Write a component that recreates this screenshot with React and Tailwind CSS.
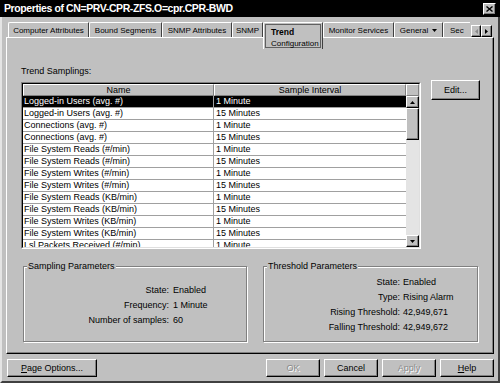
import React from "react";

const rows = [
  ["Logged-in Users (avg. #)", "1 Minute"],
  ["Logged-in Users (avg. #)", "15 Minutes"],
  ["Connections (avg. #)", "1 Minute"],
  ["Connections (avg. #)", "15 Minutes"],
  ["File System Reads (#/min)", "1 Minute"],
  ["File System Reads (#/min)", "15 Minutes"],
  ["File System Writes (#/min)", "1 Minute"],
  ["File System Writes (#/min)", "15 Minutes"],
  ["File System Reads (KB/min)", "1 Minute"],
  ["File System Reads (KB/min)", "15 Minutes"],
  ["File System Writes (KB/min)", "1 Minute"],
  ["File System Writes (KB/min)", "15 Minutes"],
  ["Lsl Packets Received (#/min)", "1 Minute"],
];

const raised =
  "bg-[#c0c0c0] border border-t-white border-l-white border-r-black border-b-black shadow-[inset_-1px_-1px_0_#808080]";

function Btn({ children, className = "", disabled }) {
  return (
    <div
      className={`flex items-center justify-center h-[18px] text-[9px] leading-none ${raised} ${
        disabled ? "text-[#8a8a8a] [text-shadow:1px_1px_0_#fff]" : "text-black"
      } ${className}`}
    >
      {children}
    </div>
  );
}

const tabBase =
  "h-[15px] flex items-center justify-center shrink-0 pt-[1px] leading-none border-t border-l border-r border-t-white border-l-white border-r-[#404040] rounded-tl-[2px] rounded-tr-[1px] bg-[#c0c0c0]";

export default function App() {
  return (
    <div className="w-[500px] h-[383px] bg-[#c0c0c0] flex flex-col font-['Liberation_Sans',Arial,sans-serif] text-black overflow-hidden select-none">
      {/* Title bar */}
      <div className="h-[17px] shrink-0 bg-black flex items-center justify-between pl-[4px] pr-[4px]">
        <span className="text-white font-bold text-[10.5px] tracking-[-0.4px] leading-none">
          Properties of CN=PRV-CPR-ZFS.O=cpr.CPR-BWD
        </span>
        <div className={`w-[13px] h-[12px] flex items-center justify-center ${raised}`}>
          <svg width="7" height="6" viewBox="0 0 7 6">
            <path d="M0.5 0.5L6.5 5.5M6.5 0.5L0.5 5.5" stroke="black" strokeWidth="1.4" />
          </svg>
        </div>
      </div>

      {/* Body */}
      <div className="flex-1 flex flex-col border-l-2 border-l-[#e4e4e4] border-r-2 border-r-[#404040] border-b-2 border-b-[#404040]">
        {/* Tabs */}
        <div className="ml-[6px] mt-[5px] h-[15px] flex items-start text-[8px] relative z-10">
          <div className={`${tabBase} w-[81px]`}>Computer Attributes</div>
          <div className={`${tabBase} w-[73px]`}>Bound Segments</div>
          <div className={`${tabBase} w-[70px]`}>SNMP Attributes</div>
          <div className={`${tabBase} w-[31px]`}>SNMP</div>
          <div className="w-[60px] h-[27px] shrink-0 bg-[#c0c0c0] border-t border-l border-r border-t-white border-l-white border-r-[#404040] rounded-tl-[2px] p-[1px]">
            <div className="w-full h-full border border-[#606060] flex flex-col pl-[5px] pt-[2px]">
              <span className="font-bold text-[8.5px] leading-[11px]">Trend</span>
              <span className="text-[8px] leading-[11px]">Configuration</span>
            </div>
          </div>
          <div className={`${tabBase} w-[71px]`}>Monitor Services</div>
          <div className={`${tabBase} w-[49px] gap-[4px]`}>
            <span>General</span>
            <svg width="5" height="3" viewBox="0 0 5 3">
              <path d="M0 0H5L2.5 3Z" fill="black" />
            </svg>
          </div>
          <div className="h-[15px] w-[27px] shrink-0 overflow-hidden flex items-center pl-[6px] pt-[1px] leading-none border-t border-l border-t-white border-l-white rounded-tl-[2px] whitespace-nowrap">
            Sec
          </div>
          <div className="ml-[1px] mt-[3px] flex">
            <div className={`w-[10px] h-[12px] flex items-center justify-center ${raised}`}>
              <svg width="3" height="5" viewBox="0 0 3 5">
                <path d="M3 0V5L0 2.5Z" fill="#8a8a8a" />
              </svg>
            </div>
            <div className={`w-[11px] h-[12px] flex items-center justify-center ${raised}`}>
              <svg width="3" height="5" viewBox="0 0 3 5">
                <path d="M0 0V5L3 2.5Z" fill="black" />
              </svg>
            </div>
          </div>
        </div>

        {/* Panel */}
        <div className="ml-[4px] w-[488px] h-[317px] shrink-0 border border-t-white border-l-white border-r-black border-b-black shadow-[inset_-1px_-1px_0_#808080] pt-[27px] pl-[14px] text-[9px]">
          <div className="h-[12px] leading-[12px]">Trend Samplings:</div>

          <div className="flex items-start mt-[3px]">
            {/* Table */}
            <div className="mt-[2px] w-[400px] h-[167px] border border-t-[#808080] border-l-[#808080] border-r-white border-b-white">
              <div className="w-full h-full border border-t-black border-l-black border-r-[#dfdfdf] border-b-[#dfdfdf] flex flex-col bg-white">
                {/* Header */}
                <div className="h-[12px] flex shrink-0 bg-[#c0c0c0]">
                  <div className="w-[191px] h-full flex items-center justify-center leading-none border-t border-l border-t-white border-l-white border-r border-b border-r-[#808080] border-b-[#808080]">
                    Name
                  </div>
                  <div className="w-[192px] h-full flex items-center justify-center leading-none border-t border-l border-t-white border-l-white border-r border-b border-r-[#808080] border-b-[#808080]">
                    Sample Interval
                  </div>
                  <div className="w-[13px] h-full border-t border-l border-t-white border-l-white border-r border-b border-r-[#808080] border-b-[#808080]" />
                </div>
                {/* Body */}
                <div className="flex-1 flex overflow-hidden">
                  <div className="w-[383px] flex flex-col">
                    {rows.map(([n, v], i) => (
                      <div
                        key={i}
                        className={`h-[12px] shrink-0 flex border-b border-b-[#a0a0a0] leading-[11px] whitespace-nowrap ${
                          i === 0 ? "bg-black text-white" : "bg-white text-black"
                        }`}
                      >
                        <div className="w-[191px] pl-[1px] border-r border-r-[#a0a0a0] overflow-hidden">{n}</div>
                        <div className="w-[192px] pl-[2px] overflow-hidden">{v}</div>
                      </div>
                    ))}
                  </div>
                  {/* Scrollbar */}
                  <div className="w-[13px] flex flex-col">
                    <div className={`h-[12px] shrink-0 flex items-center justify-center ${raised}`}>
                      <svg width="5" height="3" viewBox="0 0 5 3">
                        <path d="M0 3H5L2.5 0Z" fill="black" />
                      </svg>
                    </div>
                    <div className={`h-[32px] shrink-0 ${raised}`} />
                    <div className="flex-1 bg-[#e4e4e4]" />
                    <div className={`h-[12px] shrink-0 flex items-center justify-center ${raised}`}>
                      <svg width="5" height="3" viewBox="0 0 5 3">
                        <path d="M0 0H5L2.5 3Z" fill="black" />
                      </svg>
                    </div>
                  </div>
                </div>
              </div>
            </div>

            <Btn className="ml-[10px] w-[49px] !h-[20px]">Edit...</Btn>
          </div>

          {/* Group boxes */}
          <div className="flex mt-[17px] ml-[2px] gap-[16px]">
            <div className="relative w-[224px] h-[76px] border border-[#808080] shadow-[1px_1px_0_#fff,inset_1px_1px_0_#fff]">
              <span className="absolute -top-[7px] left-[3px] px-[1px] bg-[#c0c0c0] leading-[12px]">
                Sampling Parameters
              </span>
              <div className="pt-[16px] grid grid-cols-[145px_1fr] gap-x-[4px] auto-rows-[15px] items-center">
                <span className="text-right">State:</span>
                <span>Enabled</span>
                <span className="text-right">Frequency:</span>
                <span>1 Minute</span>
                <span className="text-right">Number of samples:</span>
                <span>60</span>
              </div>
            </div>
            <div className="relative w-[215px] h-[76px] border border-[#808080] shadow-[1px_1px_0_#fff,inset_1px_1px_0_#fff]">
              <span className="absolute -top-[7px] left-[3px] px-[1px] bg-[#c0c0c0] leading-[12px]">
                Threshold Parameters
              </span>
              <div className="pt-[8px] grid grid-cols-[136px_1fr] gap-x-[3px] auto-rows-[15px] items-center">
                <span className="text-right">State:</span>
                <span>Enabled</span>
                <span className="text-right">Type:</span>
                <span>Rising Alarm</span>
                <span className="text-right">Rising Threshold:</span>
                <span>42,949,671</span>
                <span className="text-right">Falling Threshold:</span>
                <span>42,949,672</span>
              </div>
            </div>
          </div>
        </div>

        {/* Bottom buttons */}
        <div className="mt-[5px] flex justify-between pl-[5px] pr-[4px]">
          <Btn className="w-[90px]">
            <span>
              <span className="underline">P</span>age Options...
            </span>
          </Btn>
          <div className="flex gap-[4px]">
            <Btn className="w-[54px]" disabled>OK</Btn>
            <Btn className="w-[54px]">Cancel</Btn>
            <Btn className="w-[54px]" disabled>Apply</Btn>
            <Btn className="w-[54px]">
              <span>
                <span className="underline">H</span>elp
              </span>
            </Btn>
          </div>
        </div>
      </div>
    </div>
  );
}
